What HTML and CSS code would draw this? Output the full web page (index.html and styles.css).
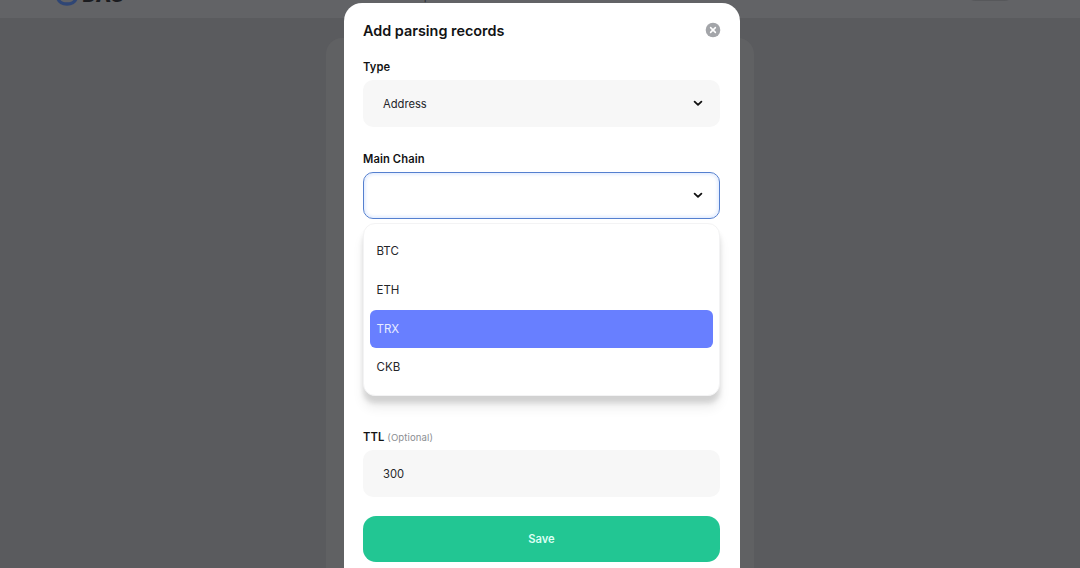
FILE: index.html
```html
<!DOCTYPE html>
<html lang="en">
<head>
    <meta charset="UTF-8">
    <meta name="viewport" content="width=device-width, initial-scale=1.0">
    <title>Add parsing records</title>
    <link rel="stylesheet" href="styles.css">
</head>
<body>
    <header class="topbar">
        <div class="logo">
            <svg width="22" height="22" viewBox="0 0 22 22" fill="none" stroke="#2f4675" stroke-width="3.4">
                <ellipse cx="11" cy="9" rx="7" ry="4"/>
                <path d="M2 14c1 8 17 8 18 0"/>
            </svg>
            <span>DAS</span>
        </div>
        <span class="nav-link">Explore</span>
        <span class="account"></span>
    </header>
    <main class="page-card"></main>

    <div class="overlay">
        <div class="modal">
            <div class="modal-header">
                <h2>Add parsing records</h2>
                <svg class="close" width="16" height="16" viewBox="0 0 16 16">
                    <circle cx="8" cy="8" r="7.3" fill="#a3a5a9"/>
                    <path d="M5.6 5.6l4.8 4.8M10.4 5.6l-4.8 4.8" stroke="#fff" stroke-width="1.5" stroke-linecap="round"/>
                </svg>
            </div>

            <div class="label">Type</div>
            <div class="field">
                <span>Address</span>
                <svg class="chevron" width="10" height="7" viewBox="0 0 10 7"><path d="M1.6 1.6L5 4.9l3.4-3.3"/></svg>
            </div>

            <div class="label">Main Chain</div>
            <div class="select">
                <div class="field active">
                    <span></span>
                    <svg class="chevron" width="10" height="7" viewBox="0 0 10 7"><path d="M1.6 1.6L5 4.9l3.4-3.3"/></svg>
                </div>
                <div class="dropdown">
                    <div class="option">BTC</div>
                    <div class="option">ETH</div>
                    <div class="option selected">TRX</div>
                    <div class="option">CKB</div>
                </div>
            </div>

            <div class="label">TTL <span class="optional">(Optional)</span></div>
            <div class="field ttl">300</div>

            <button type="button" class="save">Save</button>
        </div>
    </div>
</body>
</html>
```

FILE: styles.css
```css
* {
    box-sizing: border-box;
}

body {
    margin: 0;
    height: 568px;
    overflow: hidden;
    background-color: #5a5b5e;
    font-family: Inter, "Liberation Sans", sans-serif;
    color: #121314;
}

.topbar {
    display: flex;
    align-items: flex-end;
    height: 60px;
    margin-top: -42px;
    padding: 0 64px 12px 56px;
    background-color: #626366;
}

.logo {
    display: flex;
    align-items: flex-end;
    width: 354px;
    gap: 4px;
    font-size: 20px;
    font-weight: 800;
    line-height: 22px;
    color: #1b1c20;
}

.nav-link {
    font-size: 12px;
    line-height: 20px;
    color: #303135;
}

.account {
    width: 52px;
    height: 24px;
    margin: 0 0 5px auto;
    border-radius: 12px;
    background-color: #57585b;
}

.page-card {
    width: 428px;
    height: 530px;
    margin: 20px auto 0;
    border-radius: 16px 16px 0 0;
    background-color: #606163;
}

.overlay {
    position: absolute;
    inset: 0;
}

.modal {
    display: flow-root;
    width: 396px;
    height: 565px;
    margin: 3px 0 0 344px;
    padding: 18px 20px 0 19px;
    border-radius: 18px 18px 0 0;
    background-color: #fff;
}

.modal-header {
    display: flex;
    justify-content: space-between;
    align-items: center;
    height: 18px;
    margin-bottom: 20px;
}

.modal-header h2 {
    margin: 0;
    font-size: 14.4px;
    font-weight: 600;
}

.close {
    margin-right: -1px;
}

.label {
    height: 16px;
    margin-bottom: 5px;
    font-size: 11.2px;
    font-weight: 600;
    line-height: 17px;
    letter-spacing: 0.1px;
}

.optional {
    font-size: 9.6px;
    font-weight: 400;
    color: #8c8e92;
}

.field {
    display: flex;
    justify-content: space-between;
    align-items: center;
    height: 47px;
    margin-bottom: 24px;
    padding: 0 17px 0 20px;
    border-radius: 10px;
    background-color: #f7f7f7;
    font-size: 11.2px;
    color: #25262a;
}

.chevron {
    fill: none;
    stroke: #111;
    stroke-width: 1.8;
    stroke-linecap: round;
    stroke-linejoin: round;
}

.select {
    position: relative;
    margin-bottom: 210px;
}

.field.active {
    margin-bottom: 0;
    border: 1px solid #5580cf;
    padding: 0 16px 0 19px;
    background-color: #fff;
    box-shadow: inset 0 0 3px 2px #e5eeff;
}

.dropdown {
    position: absolute;
    top: 51px;
    left: 0;
    right: 0;
    height: 173px;
    padding: 8px 6px;
    border: 1px solid #f3f3f4;
    border-radius: 12px;
    background-color: #fff;
    box-shadow: 0 12px 12px rgba(0, 0, 0, 0.07), 0 7px 5px rgba(0, 0, 0, 0.12);
}

.option {
    height: 38.8px;
    padding-left: 6.5px;
    border-radius: 6px;
    font-size: 11.5px;
    line-height: 39.6px;
    color: #25262a;
}

.option.selected {
    background-color: #687fff;
    color: #e7ebff;
}

.field.ttl {
    margin-bottom: 19px;
}

.save {
    display: block;
    width: 100%;
    height: 46px;
    padding: 0;
    border: none;
    border-radius: 13px;
    background-color: #22c693;
    font-family: inherit;
    font-size: 11.2px;
    font-weight: 600;
    color: #dcfff3;
}
```
